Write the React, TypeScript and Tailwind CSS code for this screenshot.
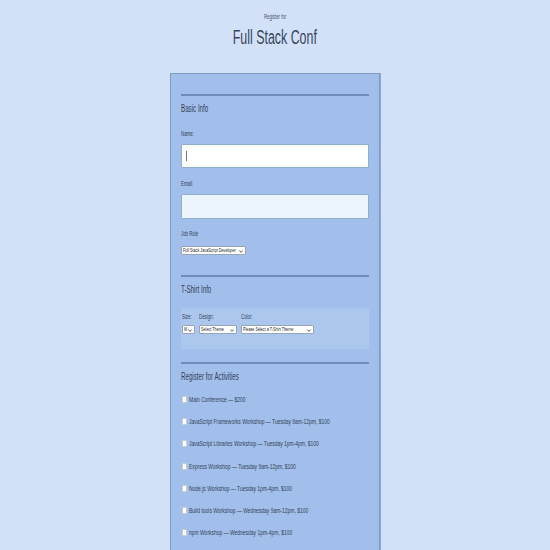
import React from "react";

const font = { fontFamily: '"Liberation Sans", Arial, sans-serif' };

function T({ children, className = "" }: { children: React.ReactNode; className?: string }) {
  return (
    <span className={`inline-block whitespace-nowrap origin-left scale-x-[0.62] ${className}`}>{children}</span>
  );
}

function Select({ w, label }: { w: string; label: string }) {
  return (
    <div
      role="combobox"
      className={`relative ${w} h-[9px] bg-white border border-[#9aa5b4] rounded-[1px] overflow-hidden flex items-center pl-[1px]`}
    >
      <T className="text-[6px] leading-[7px] text-[#222]">{label}</T>
      <svg className="absolute right-[2px] top-[2.5px]" width="4" height="3" viewBox="0 0 4 3">
        <path d="M0.3 0.5 L2 2.4 L3.7 0.5" fill="none" stroke="#333" strokeWidth="0.8" />
      </svg>
    </div>
  );
}

const activities = [
  "Main Conference — $200",
  "JavaScript Frameworks Workshop — Tuesday 9am-12pm, $100",
  "JavaScript Libraries Workshop — Tuesday 1pm-4pm, $100",
  "Express Workshop — Tuesday 9am-12pm, $100",
  "Node.js Workshop — Tuesday 1pm-4pm, $100",
  "Build tools Workshop — Wednesday 9am-12pm, $100",
  "npm Workshop — Wednesday 1pm-4pm, $100",
];

export default function App() {
  return (
    <div className="w-[550px] h-[550px] overflow-hidden bg-[#d3e1f8] text-[#334257]" style={font}>
      <div className="flex flex-col items-center pt-[12px]">
        <div className="text-[7px] leading-[9px] text-[#445469]">
          <span className="inline-block whitespace-nowrap origin-center scale-x-[0.62]">Register for</span>
        </div>
        <h1 className="text-[20px] leading-[22px] mt-[5px] text-[#35465d]">
          <span className="inline-block whitespace-nowrap origin-center scale-x-[0.62]">Full Stack Conf</span>
        </h1>
      </div>
      <div className="mx-auto mt-[25px] w-[210px] bg-[#a1bfea] border border-[#7f9cc8] shadow-[1px_0_0_#8aa8d4] px-[10px] pt-[20px] pb-[20px]">
        <div className="h-[2px] bg-[#6e8db8]" />
        <div className="text-[10px] leading-[12px] mt-[7px]">
          <T>Basic Info</T>
        </div>
        <div className="text-[7px] leading-[8px] mt-[15px]">
          <T>Name:</T>
        </div>
        <div className="relative mt-[6px]">
          <input className="block w-full h-[24px] bg-white border border-[#8eb0cf] rounded-[1px]" />
          <span className="absolute left-[5px] top-[7px] w-[1px] h-[10px] bg-[#777]" />
        </div>
        <div className="text-[7px] leading-[8px] mt-[12px]">
          <T>Email:</T>
        </div>
        <input className="block w-full h-[25px] mt-[6px] bg-[#ecf5fb] border border-[#8eb0cf] rounded-[1px]" />
        <div className="text-[7px] leading-[8px] mt-[11px]">
          <T>Job Role</T>
        </div>
        <div className="mt-[8px]">
          <Select w="w-[65px]" label="Full Stack JavaScript Developer" />
        </div>
        <div className="h-[2px] bg-[#6e8db8] mt-[20px]" />
        <div className="text-[10px] leading-[12px] mt-[7px]">
          <T>T-Shirt Info</T>
        </div>
        <div className="mt-[12px] bg-[#abc7ee] h-[41px] px-[1px] pt-[5px]">
          <div className="flex gap-[4px]">
            <div className="flex flex-col gap-[4px] w-[13px]">
              <div className="text-[7px] leading-[8px]">
                <T>Size:</T>
              </div>
              <Select w="w-[13px]" label="M" />
            </div>
            <div className="flex flex-col gap-[4px] w-[38px]">
              <div className="text-[7px] leading-[8px]">
                <T>Design:</T>
              </div>
              <Select w="w-[38px]" label="Select Theme" />
            </div>
            <div className="flex flex-col gap-[4px] w-[73px]">
              <div className="text-[7px] leading-[8px]">
                <T>Color:</T>
              </div>
              <Select w="w-[73px]" label="Please Select a T-Shirt Theme" />
            </div>
          </div>
        </div>
        <div className="h-[2px] bg-[#6e8db8] mt-[13px]" />
        <div className="text-[10px] leading-[12px] mt-[7px]">
          <T>Register for Activities</T>
        </div>
        <div className="flex flex-col mt-[5px]">
          {activities.map((a) => (
            <label key={a} className="flex items-center h-[22.3px] gap-[2px] pl-[1px]">
              <input
                type="checkbox"
                className="appearance-none shrink-0 w-[5px] h-[7px] bg-white border border-[#c8ccd3] rounded-[1px]"
              />
              <span className="text-[8px] leading-[9px]">
                <T>{a}</T>
              </span>
            </label>
          ))}
        </div>
      </div>
    </div>
  );
}
